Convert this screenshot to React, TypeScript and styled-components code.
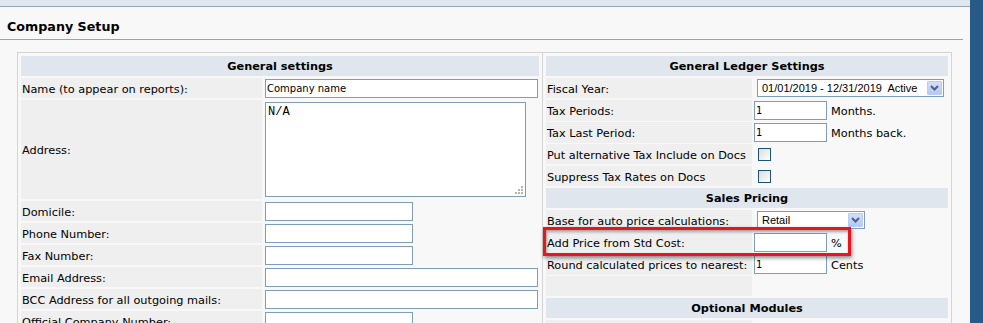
import styled, { createGlobalStyle } from "styled-components";

const GlobalStyle = createGlobalStyle`
  html, body {
    margin: 0;
    height: 100%;
    overflow: hidden;
  }
  body {
    background: #f8f8f8;
    color: #000;
    font-family: "DejaVu Sans", Verdana, sans-serif;
    font-size: 11.3px;
  }
`;

const Page = styled.div`
  display: flex;
  height: 323px;
`;

const Main = styled.div`
  flex: 1;
  min-width: 0;
`;

const SideBar = styled.div`
  width: 13px;
  background: #265a87;
`;

const TopStrip = styled.div`
  height: 6px;
  background: #dfe6ed;
  border-bottom: 1px solid #8fa5b8;
`;

const TitleBar = styled.h1`
  box-sizing: border-box;
  height: 33px;
  margin: 0 7px 0 0;
  padding: 12px 0 0 7px;
  font-size: 12.7px;
  line-height: 15px;
  font-weight: bold;
  border-bottom: 1px solid #8fa5b8;
`;

const Content = styled.div`
  padding: 12px 0 0 17px;
`;

const Frame = styled.div`
  box-sizing: border-box;
  width: 935px;
  border: 1px solid #d4d4d4;
  display: grid;
  grid-template-columns: 525px 1fr;
`;

const Panel = styled.div<{ $divider?: boolean }>`
  display: flex;
  flex-direction: column;
  gap: 2px;
  padding: 3px;
  border-right: ${({ $divider }) => ($divider ? "1px solid #d4d4d4" : "none")};
`;

const Header = styled.div`
  box-sizing: border-box;
  height: 20px;
  padding-top: 1px;
  line-height: 19px;
  background: #dfe6ed;
  font-weight: bold;
  text-align: center;
`;

const Row = styled.div<{ $labelWidth: number; $height?: number }>`
  position: relative;
  display: grid;
  grid-template-columns: ${({ $labelWidth }) => $labelWidth}px 1fr;
  column-gap: 2px;
  height: ${({ $height }) => $height ?? 20}px;
`;

const Label = styled.div`
  display: flex;
  align-items: center;
  padding: 2px 0 0 1px;
  background: #efefef;
  white-space: nowrap;
  overflow: hidden;
`;

const Value = styled.div<{ $indent?: number }>`
  display: flex;
  align-items: flex-start;
  padding: 1px 0 0 ${({ $indent }) => $indent ?? 0}px;
`;

const TextInput = styled.input<{ $w: number }>`
  box-sizing: border-box;
  width: ${({ $w }) => $w}px;
  height: 19px;
  margin: 0;
  padding: 0 1px;
  border: 1px solid #7f9db9;
  background: #fff;
  font: 10px "DejaVu Sans", Verdana, sans-serif;
  color: #000;
  outline: none;
`;

const AreaWrap = styled.div`
  position: relative;
  margin-top: 1px;
`;

const TextArea = styled.textarea`
  display: block;
  box-sizing: border-box;
  width: 261px;
  height: 95px;
  margin: 0;
  padding: 2px;
  border: 1px solid #7f9db9;
  background: #fff;
  font: 12px "Liberation Mono", "Courier New", monospace;
  color: #000;
  outline: none;
  resize: none;
`;

const Grip = styled.svg`
  position: absolute;
  right: 3px;
  bottom: 3px;
`;

const Unit = styled.span`
  margin-left: 4px;
  line-height: 19px;
  padding-top: 1px;
`;

const SelectBox = styled.div<{ $w: number }>`
  box-sizing: border-box;
  display: flex;
  align-items: center;
  width: ${({ $w }) => $w}px;
  height: 18px;
  margin-left: 3px;
  padding-left: 4px;
  border: 1px solid #7f9db9;
  background: #fff;
  font: 11px "Liberation Sans", Arial, sans-serif;
  white-space: pre;
`;

const SelectArrow = styled.span`
  box-sizing: border-box;
  display: flex;
  align-items: center;
  justify-content: center;
  width: 15px;
  height: 14px;
  margin: 0 1px 0 auto;
  border: 1px solid #b9cbf3;
  border-radius: 1px;
  background: linear-gradient(#d2defd, #b4c8f6);
`;

const CheckBox = styled.input.attrs({ type: "checkbox" })`
  appearance: none;
  box-sizing: border-box;
  width: 13px;
  height: 13px;
  margin: 3px 0 0 4px;
  border: 1px solid #1c5180;
  background: linear-gradient(135deg, #dcdcd7, #ffffff);
`;

const Highlight = styled.div`
  position: absolute;
  left: -3px;
  top: -5px;
  width: 308px;
  height: 29px;
  box-sizing: border-box;
  border: 3px solid #e8161c;
  box-shadow: 1px 2px 4px rgba(0, 0, 0, 0.45), inset 1px 2px 3px rgba(0, 0, 0, 0.35);
  pointer-events: none;
  z-index: 2;
`;

function Select({ width, value }: { width: number; value: string }) {
  return (
    <SelectBox $w={width}>
      <span>{value}</span>
      <SelectArrow>
        <svg width="9" height="6" viewBox="0 0 9 6">
          <path d="M1 1 L4.5 4.5 L8 1" fill="none" stroke="#4d6185" strokeWidth="2" />
        </svg>
      </SelectArrow>
    </SelectBox>
  );
}

const LEFT = 241;
const RIGHT = 206;

const contactFields = [
  { label: "Domicile:", width: 148 },
  { label: "Phone Number:", width: 148 },
  { label: "Fax Number:", width: 148 },
  { label: "Email Address:", width: 273 },
  { label: "BCC Address for all outgoing mails:", width: 273 },
  { label: "Official Company Number:", width: 148 },
];

// dotted resize grip, 3-2-1 dots
const gripDots = [
  [6, 0],
  [3, 3],
  [6, 3],
  [0, 6],
  [3, 6],
  [6, 6],
];

function App() {
  return (
    <>
      <GlobalStyle />
      <Page>
        <Main>
          <TopStrip />
          <TitleBar>Company Setup</TitleBar>
          <Content>
            <Frame>
              <Panel $divider>
                <Header>General settings</Header>
                <Row $labelWidth={LEFT}>
                  <Label>Name (to appear on reports):</Label>
                  <Value $indent={1}>
                    <TextInput $w={273} defaultValue="Company name" />
                  </Value>
                </Row>
                <Row $labelWidth={LEFT} $height={99}>
                  <Label>Address:</Label>
                  <Value $indent={1}>
                    <AreaWrap>
                      <TextArea defaultValue="N/A" />
                      <Grip width="8" height="8" viewBox="0 0 8 8">
                        {gripDots.map(([x, y]) => (
                          <rect key={`${x}-${y}`} x={x} y={y} width="2" height="2" fill="#b8b4a8" />
                        ))}
                      </Grip>
                    </AreaWrap>
                  </Value>
                </Row>
                {contactFields.map((f) => (
                  <Row key={f.label} $labelWidth={LEFT}>
                    <Label>{f.label}</Label>
                    <Value $indent={1}>
                      <TextInput $w={f.width} />
                    </Value>
                  </Row>
                ))}
              </Panel>

              <Panel>
                <Header>General Ledger Settings</Header>
                <Row $labelWidth={RIGHT}>
                  <Label>Fiscal Year:</Label>
                  <Value>
                    <Select width={187} value={"01/01/2019 - 12/31/2019  Active"} />
                  </Value>
                </Row>
                <Row $labelWidth={RIGHT}>
                  <Label>Tax Periods:</Label>
                  <Value>
                    <TextInput $w={73} defaultValue="1" />
                    <Unit>Months.</Unit>
                  </Value>
                </Row>
                <Row $labelWidth={RIGHT}>
                  <Label>Tax Last Period:</Label>
                  <Value>
                    <TextInput $w={73} defaultValue="1" />
                    <Unit>Months back.</Unit>
                  </Value>
                </Row>
                <Row $labelWidth={RIGHT}>
                  <Label>Put alternative Tax Include on Docs</Label>
                  <Value>
                    <CheckBox />
                  </Value>
                </Row>
                <Row $labelWidth={RIGHT}>
                  <Label>Suppress Tax Rates on Docs</Label>
                  <Value>
                    <CheckBox />
                  </Value>
                </Row>

                <Header>Sales Pricing</Header>
                <Row $labelWidth={RIGHT}>
                  <Label>Base for auto price calculations:</Label>
                  <Value>
                    <Select width={108} value="Retail" />
                  </Value>
                </Row>
                <Row $labelWidth={RIGHT}>
                  <Label>Add Price from Std Cost:</Label>
                  <Value>
                    <TextInput $w={73} />
                    <Unit>%</Unit>
                  </Value>
                  <Highlight />
                </Row>
                <Row $labelWidth={RIGHT}>
                  <Label>Round calculated prices to nearest:</Label>
                  <Value>
                    <TextInput $w={73} defaultValue="1" />
                    <Unit>Cents</Unit>
                  </Value>
                </Row>
                <Row $labelWidth={RIGHT}>
                  <Label />
                  <Value />
                </Row>

                <Header>Optional Modules</Header>
                <Row $labelWidth={RIGHT}>
                  <Label />
                  <Value />
                </Row>
              </Panel>
            </Frame>
          </Content>
        </Main>
        <SideBar />
      </Page>
    </>
  );
}

export default App;
